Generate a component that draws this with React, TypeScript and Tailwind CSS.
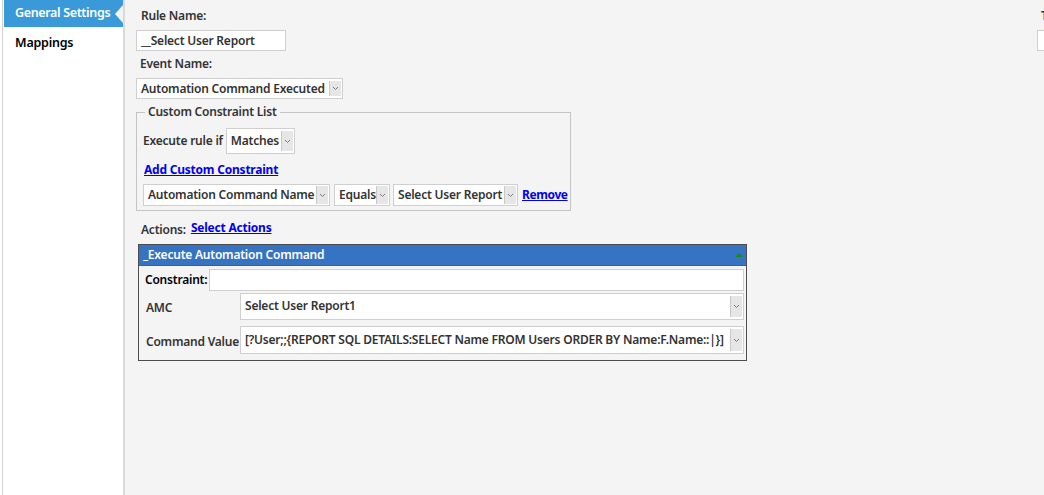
import React from "react";

const Chevron = () => (
  <svg width="7" height="5" viewBox="0 0 7 5" fill="none">
    <path d="M1 1 L3.5 3.5 L6 1" stroke="#7a7a7a" strokeWidth="1" />
  </svg>
);

const Select = ({
  text,
  className,
  btnClass = "",
  textClass = "items-center",
}: {
  text: string;
  className: string;
  btnClass?: string;
  textClass?: string;
}) => (
  <div className={`flex shrink-0 min-w-0 bg-white border border-[#cfcfcf] ${className}`}>
    <div className={`flex-1 min-w-0 flex pl-[4px] whitespace-nowrap overflow-hidden ${textClass}`}>{text}</div>
    <div className={`flex shrink-0 items-center justify-center w-[12px] bg-[#e6e6e6] border-l border-[#c8c8c8] ${btnClass}`}>
      <Chevron />
    </div>
  </div>
);

export default function App() {
  return (
    <div
      className="flex w-[1044px] h-[495px] overflow-hidden bg-white text-[12px] tracking-[-0.22px] font-semibold text-[#333] whitespace-nowrap"
      style={{ fontFamily: '"Noto Sans", "Open Sans", sans-serif' }}
    >
      {/* Sidebar */}
      <div className="shrink-0 ml-[2px] w-[123px] h-full bg-white border-l border-[#d4d4d4] border-r-2 border-r-[#dadada] flex flex-col">
        <div className="relative ml-[1px] h-[27px] bg-[#3a9ad9] text-white flex items-center pl-[11px] leading-none text-[12.5px] tracking-[-0.35px]">
          General Settings
          <div className="absolute right-0 top-[5px] w-0 h-0 border-y-[9px] border-y-transparent border-r-[8px] border-r-[#f4f4f4]" />
        </div>
        <div className="pl-[12px] mt-[10px] text-black leading-none text-[12.5px]">Mappings</div>
      </div>

      {/* Main */}
      <div className="flex-1 flex bg-[#f4f4f4]">
        <div className="shrink-0 w-[912px] pl-[11px] flex flex-col">
          <div className="pl-[5px] mt-[9px] leading-[14px]">Rule Name:</div>
          <div className="mt-[7px] w-[150px] h-[21px] bg-white border border-[#cfcfcf] flex items-center pl-[4px] text-[#333]">
            __Select User Report
          </div>
          <div className="pl-[4px] mt-[6px] leading-[14px]">Event Name:</div>
          <Select text="Automation Command Executed" className="mt-[7px] w-[207px] h-[21px]" btnClass="my-[2px] mr-[1px]" />

          {/* Fieldset */}
          <fieldset className="mt-[6px] w-[435px] min-w-0 h-[106px] border border-[#c4c4c4] pl-[6px] pr-[3px] m-0">
            <legend className="ml-[2px] px-[3px] leading-[14px]">Custom Constraint List</legend>
            <div className="flex items-center mt-[9px]">
              <span className="mr-[3px]">Execute rule if</span>
              <Select text="Matches" className="w-[69px] h-[26px]" btnClass="my-[2px] mr-[1px]" />
            </div>
            <div className="mt-[9px] pl-[1px] leading-[14px] text-[#0000ee] underline font-bold">Add Custom Constraint</div>
            <div className="flex items-center mt-[7px]">
              <Select text="Automation Command Name" className="w-[187px] h-[22px]" btnClass="my-[1px] mr-[1px]" />
              <Select text="Equals" className="ml-[4px] w-[56px] h-[22px]" btnClass="my-[1px] mr-[1px]" />
              <Select text="Select User Report" className="ml-[3px] w-[125px] h-[22px]" btnClass="my-[1px] mr-[1px]" />
              <span className="ml-[4px] text-[#0000ee] underline font-bold tracking-[-0.4px]">Remove</span>
            </div>
          </fieldset>

          <div className="flex items-end mt-[10px] pl-[5px] leading-[14px]">
            <span>Actions:</span>
            <span className="ml-[5px] mb-[2px] text-[#0000ee] underline font-bold">Select Actions</span>
          </div>

          {/* Action panel */}
          <div className="mt-[7px] ml-[2px] w-[609px] h-[117px] border border-[#4d4d4d] flex flex-col">
            <div className="relative h-[21px] bg-[#3673c3] text-white flex items-center pl-[4px] border-b border-[#2f62a8]">
              _Execute Automation Command
              <div className="absolute right-[3px] top-[8px] w-0 h-0 border-x-[4px] border-x-transparent border-b-[4px] border-b-[#1a8a1a]" />
            </div>
            <div className="flex items-center mt-[3px] pl-[6px] pr-[2px]">
              <span className="text-black mr-[2px]">Constraint:</span>
              <div className="flex-1 h-[22px] bg-white border border-[#cfcfcf]" />
            </div>
            <div className="flex mt-[2px] pr-[2px]">
              <span className="shrink-0 w-[101px] pl-[7px] flex items-center pt-[3px]">AMC</span>
              <Select
                text="Select User Report1"
                className="flex-1 h-[27px]"
                textClass="items-start pt-[3px]"
                btnClass="my-[2px] mr-[1px]"
              />
            </div>
            <div className="flex mt-[6px] pr-[2px]">
              <span className="shrink-0 w-[101px] pl-[7px] flex items-center pt-[3px]">Command Value</span>
              <Select
                text="[?User;;{REPORT SQL DETAILS:SELECT Name FROM Users ORDER BY Name:F.Name::|}]"
                className="flex-1 h-[28px]"
                btnClass="my-[2px] mr-[1px]"
              />
            </div>
          </div>
        </div>

        {/* Clipped right column */}
        <div className="flex-1 overflow-hidden flex flex-col">
          <div className="mt-[9px] pl-[4px] leading-[14px]">Tag</div>
          <div className="mt-[7px] w-[150px] h-[21px] bg-white border border-[#cfcfcf]" />
        </div>
      </div>
    </div>
  );
}
